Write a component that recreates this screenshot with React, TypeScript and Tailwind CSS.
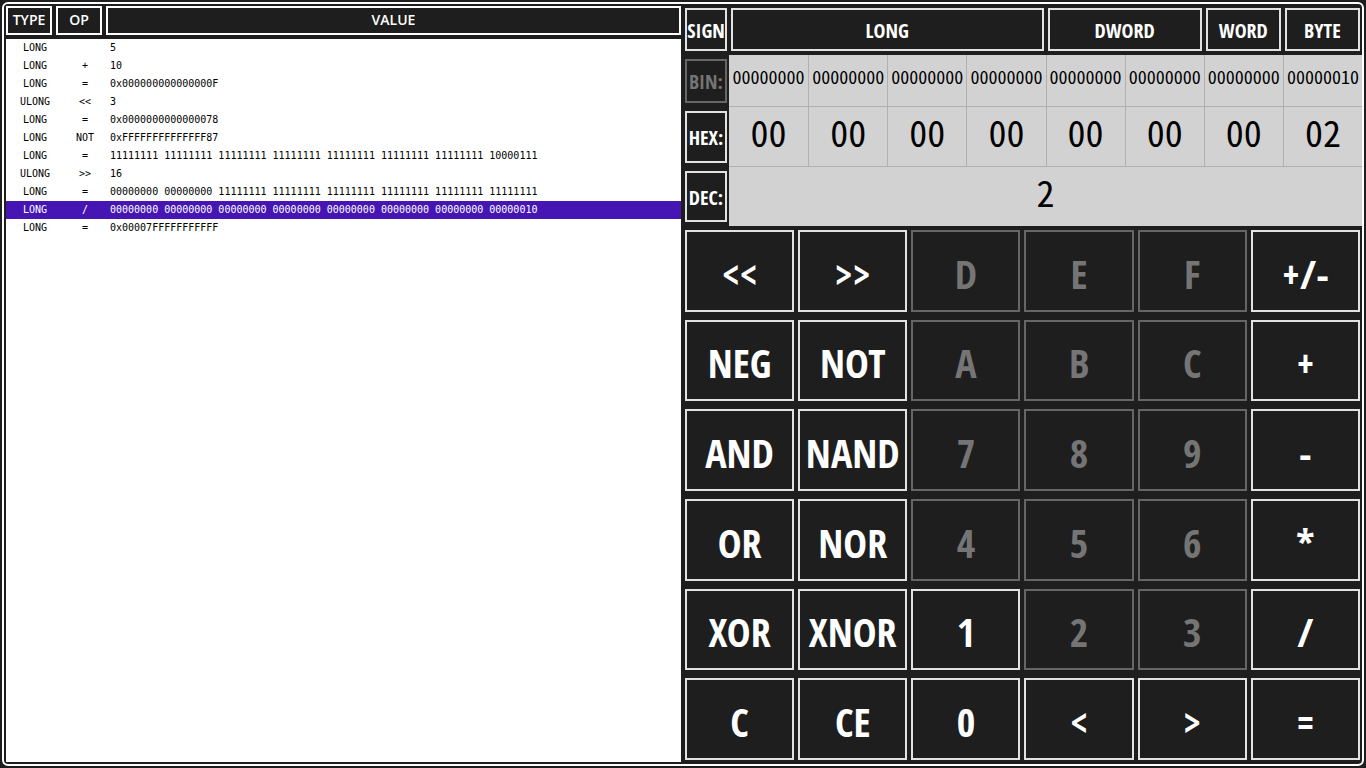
import React from "react";
import clsx from "clsx";

type HistoryEntry = {
  type: string;
  op: string;
  value: string;
  selected?: boolean;
};

const ZERO = "00000000";
const ONES = "11111111";

const history: HistoryEntry[] = [
  { type: "LONG", op: "", value: "5" },
  { type: "LONG", op: "+", value: "10" },
  { type: "LONG", op: "=", value: "0x000000000000000F" },
  { type: "ULONG", op: "<<", value: "3" },
  { type: "LONG", op: "=", value: "0x0000000000000078" },
  { type: "LONG", op: "NOT", value: "0xFFFFFFFFFFFFFF87" },
  {
    type: "LONG",
    op: "=",
    value: [ONES, ONES, ONES, ONES, ONES, ONES, ONES, "10000111"].join(" "),
  },
  { type: "ULONG", op: ">>", value: "16" },
  {
    type: "LONG",
    op: "=",
    value: [ZERO, ZERO, ONES, ONES, ONES, ONES, ONES, ONES].join(" "),
  },
  {
    type: "LONG",
    op: "/",
    value: [ZERO, ZERO, ZERO, ZERO, ZERO, ZERO, ZERO, "00000010"].join(" "),
    selected: true,
  },
  { type: "LONG", op: "=", value: "0x00007FFFFFFFFFFF" },
];

const bytes = [
  { bin: ZERO, hex: "00" },
  { bin: ZERO, hex: "00" },
  { bin: ZERO, hex: "00" },
  { bin: ZERO, hex: "00" },
  { bin: ZERO, hex: "00" },
  { bin: ZERO, hex: "00" },
  { bin: ZERO, hex: "00" },
  { bin: "00000010", hex: "02" },
];

const sizes = [
  { label: "LONG", span: "col-span-4" },
  { label: "DWORD", span: "col-span-2" },
  { label: "WORD", span: "col-span-1" },
  { label: "BYTE", span: "col-span-1" },
];

const keys = [
  ["<<", ">>", "D", "E", "F", "+/-"],
  ["NEG", "NOT", "A", "B", "C", "+"],
  ["AND", "NAND", "7", "8", "9", "-"],
  ["OR", "NOR", "4", "5", "6", "*"],
  ["XOR", "XNOR", "1", "2", "3", "/"],
  ["C", "CE", "0", "<", ">", "="],
];

// only 0 and 1 can be typed while the base is binary
const isDisabled = (row: number, col: number) =>
  col >= 2 && col <= 4 && row < 5 && keys[row][col] !== "1";

const HeaderBox = ({ children }: { children: React.ReactNode }) => (
  <div className="flex h-[29px] items-center justify-center border-2 border-white pb-[2px] text-[14px] leading-4 font-semibold">
    {children}
  </div>
);

const CalcButton = ({
  label,
  disabled,
  large,
}: {
  label: string;
  disabled?: boolean;
  large?: boolean;
}) => (
  <button
    type="button"
    disabled={disabled}
    className={clsx(
      "flex h-full w-full items-center justify-center border-2 font-['Open_Sans_Condensed','Open_Sans',sans-serif] font-bold",
      large ? "pt-[6px] text-[40px] leading-10" : "pt-[2px] text-[20px] leading-6",
      disabled
        ? "border-[#666666] text-[#757575]"
        : "border-[#e2e2e2] text-white"
    )}
  >
    {label}
  </button>
);

const History = () => (
  <section className="py-[2px] pl-[2px]">
    <div className="h-full bg-white">
      <table className="w-full table-fixed border-collapse">
        <thead className="bg-[#1e1e1e] font-['Open_Sans',sans-serif] text-white">
          <tr>
            <th className="w-12 p-0 pr-[2px] pb-1">
              <HeaderBox>TYPE</HeaderBox>
            </th>
            <th className="w-[50px] p-0 px-[2px] pb-1">
              <HeaderBox>OP</HeaderBox>
            </th>
            <th className="p-0 pb-1 pl-[2px]">
              <HeaderBox>VALUE</HeaderBox>
            </th>
          </tr>
        </thead>
        <tbody className="font-['DejaVu_Sans_Mono',monospace] text-[10px] leading-[18px]">
          {history.map((entry, i) => (
            <tr
              key={i}
              className={clsx(
                "h-[18px]",
                entry.selected ? "bg-[#4516b4] text-white" : "text-black"
              )}
            >
              <td className="p-0 pl-[10px] text-center">{entry.type}</td>
              <td className="p-0 pl-3 text-center">{entry.op}</td>
              <td className="p-0 pl-[6px] whitespace-nowrap">{entry.value}</td>
            </tr>
          ))}
        </tbody>
      </table>
    </div>
  </section>
);

const Display = () => (
  <div className="grid grid-cols-[46px_1fr] grid-rows-[51px_52px_60px_59px] font-['Noto_Sans_Mono_CJK_SC','Roboto_Condensed',monospace]">
    <div className="px-[2px] py-1">
      <CalcButton label="SIGN" />
    </div>
    <div className="grid grid-cols-8">
      {sizes.map((size) => (
        <div key={size.label} className={clsx("px-[2px] py-1", size.span)}>
          <CalcButton label={size.label} />
        </div>
      ))}
    </div>

    {/* binary */}
    <div className="px-[2px] py-1">
      <CalcButton label="BIN:" disabled />
    </div>
    <div className="grid grid-cols-8 border-b border-[#b0b0b0] bg-[#d2d2d2] text-[18px] leading-[42px] text-black">
      {bytes.map((byte, i) => (
        <div
          key={i}
          className="border-l border-[#b0b0b0] text-center first:border-l-0"
        >
          {byte.bin}
        </div>
      ))}
    </div>

    {/* hexadecimal */}
    <div className="px-[2px] py-1">
      <CalcButton label="HEX:" />
    </div>
    <div className="grid grid-cols-8 border-b border-[#b0b0b0] bg-[#d2d2d2] text-[36px] leading-[48px] text-black">
      {bytes.map((byte, i) => (
        <div
          key={i}
          className="border-l border-[#b0b0b0] text-center first:border-l-0"
        >
          {byte.hex}
        </div>
      ))}
    </div>

    {/* decimal */}
    <div className="px-[2px] py-1">
      <CalcButton label="DEC:" />
    </div>
    <div className="bg-[#d2d2d2] text-center text-[36px] leading-[48px] text-black">
      2
    </div>
  </div>
);

const Keypad = () => (
  <div className="grid flex-1 grid-cols-6 grid-rows-6">
    {keys.map((row, r) =>
      row.map((label, c) => (
        <div key={`${r}-${c}`} className="px-[2px] py-1">
          <CalcButton label={label} disabled={isDisabled(r, c)} large />
        </div>
      ))
    )}
  </div>
);

export default function App() {
  return (
    <main className="flex min-h-screen bg-[#1e1e1e] p-[2px]">
      <div className="grid flex-1 grid-cols-[calc(50%-2px)_1fr] rounded-md border-2 border-white">
        <History />
        <section className="flex flex-col pl-[2px]">
          <Display />
          <Keypad />
        </section>
      </div>
    </main>
  );
}
